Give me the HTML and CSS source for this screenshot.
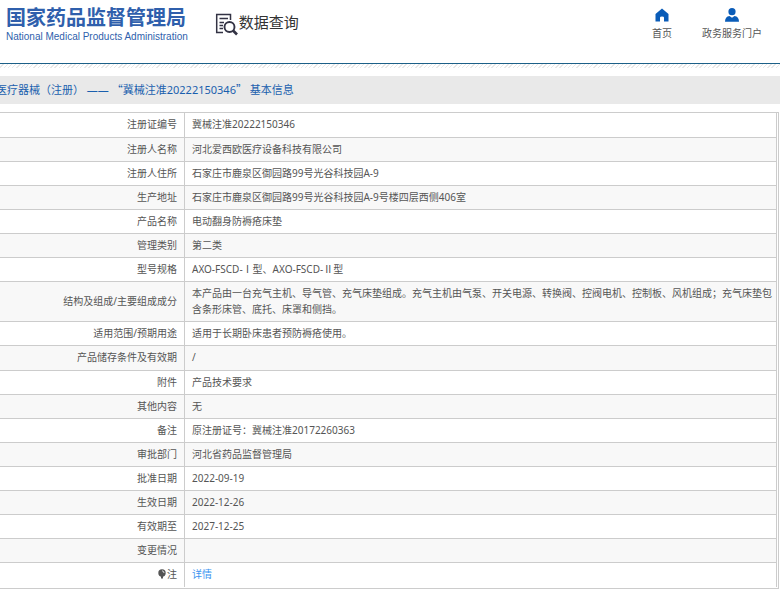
FILE: index.html
```html
<!DOCTYPE html>
<html lang="zh-CN">
<head>
  <meta charset="UTF-8">
  <meta name="viewport" content="width=device-width, initial-scale=1.0">
  <title>国家药品监督管理局 - 数据查询</title>
  <link rel="stylesheet" href="styles.css">
</head>
<body>
  <header class="header">
    <div class="logo">
      <div class="logo-cn">国家药品监督管理局</div>
      <div class="logo-en">National Medical Products Administration</div>
    </div>
    <div class="search-title">
      <svg class="search-icon" viewBox="0 0 24 24" width="24" height="24" fill="none" stroke="#333344">
        <path d="M8 20.500H1.700V2.500H15.500V8" stroke-width="1.500"/>
        <path d="M4.500 6.500H13M4.500 10.500H9M4.500 13.500H8M4.500 16.500H8" stroke-width="1.300"/>
        <circle cx="14.500" cy="15" r="5" stroke-width="1.900"/>
        <path d="M18 18.500L22 22.500" stroke-width="2.600"/>
      </svg>
      <span>数据查询</span>
    </div>
    <nav class="nav">
      <a href="#">
        <svg viewBox="0 0 14 14" width="14" height="14" fill="#0a5cb8"><path d="M7 0.500L13.500 6V13.500H9V9.500Q9 8.500 7 8.500T5 9.500V13.500H0.500V6Z"/></svg>
        首页
      </a>
      <a href="#">
        <svg viewBox="0 0 14 14" width="14" height="14" fill="#0a5cb8"><circle cx="7" cy="3.700" r="3.600"/><path d="M0 13.800Q0 8.600 4.500 8L7 9.800L9.500 8Q14 8.600 14 13.800Z"/></svg>
        政务服务门户
      </a>
    </nav>
  </header>
  <div class="stripe"></div>

  <main>
    <h1 class="title">医疗器械（注册） —— <span class="quote">“</span>冀械注准20222150346<span class="quote">”</span> 基本信息</h1>

    <div class="detail">
      <table>
        <tbody>
          <tr><th scope="row">注册证编号</th><td>冀械注准20222150346</td></tr>
          <tr><th scope="row">注册人名称</th><td>河北爱西欧医疗设备科技有限公司</td></tr>
          <tr><th scope="row">注册人住所</th><td>石家庄市鹿泉区御园路99号光谷科技园A-9</td></tr>
          <tr><th scope="row">生产地址</th><td>石家庄市鹿泉区御园路99号光谷科技园A-9号楼四层西侧406室</td></tr>
          <tr><th scope="row">产品名称</th><td>电动翻身防褥疮床垫</td></tr>
          <tr><th scope="row">管理类别</th><td>第二类</td></tr>
          <tr><th scope="row">型号规格</th><td>AXO-FSCD-Ⅰ型、AXO-FSCD-Ⅱ型</td></tr>
          <tr><th scope="row">结构及组成/主要组成成分</th><td>本产品由一台充气主机、导气管、充气床垫组成。充气主机由气泵、开关电源、转换阀、控阀电机、控制板、风机组成；充气床垫包含条形床管、底托、床罩和侧挡。</td></tr>
          <tr><th scope="row">适用范围/预期用途</th><td>适用于长期卧床患者预防褥疮使用。</td></tr>
        </tbody>
        <tbody>
          <tr><th scope="row">产品储存条件及有效期</th><td>/</td></tr>
          <tr><th scope="row">附件</th><td>产品技术要求</td></tr>
          <tr><th scope="row">其他内容</th><td>无</td></tr>
          <tr><th scope="row">备注</th><td>原注册证号：冀械注准20172260363</td></tr>
          <tr><th scope="row">审批部门</th><td>河北省药品监督管理局</td></tr>
          <tr><th scope="row">批准日期</th><td>2022-09-19</td></tr>
          <tr><th scope="row">生效日期</th><td>2022-12-26</td></tr>
          <tr><th scope="row">有效期至</th><td>2027-12-25</td></tr>
          <tr><th scope="row">变更情况</th><td></td></tr>
          <tr><th scope="row"><svg class="note-icon" viewBox="0 0 8 10" width="8" height="10"><circle cx="4" cy="4" r="3.700" fill="#555"/><path d="M3 7H5V9.500H3Z" fill="#555"/><path d="M4 1.800Q6 2 6 4" fill="none" stroke="#ddd"/></svg>注</th><td><a href="#">详情</a></td></tr>
        </tbody>
      </table>
    </div>
  </main>
</body>
</html>
```
FILE: styles.css
```css
* {
  box-sizing: border-box;
}

body {
  margin: 0;
  font-family: "Noto Sans", "Noto Sans CJK SC", sans-serif;
  font-size: 10px;
  line-height: 16px;
  color: #555;
  background: #fff;
  overflow-x: hidden;
}

a {
  color: #3b94f0;
  text-decoration: none;
}

.header {
  display: flex;
  align-items: flex-start;
  height: 64px;
  padding: 5px 18px 0 6px;
  border-bottom: 1px solid #1c6088;
}

.logo {
  color: #2f5fac;
  white-space: nowrap;
}

.logo-cn {
  font-family: "Noto Sans CJK SC", sans-serif;
  font-size: 20px;
  line-height: 24px;
  font-weight: bold;
}

.logo-en {
  font-family: "Liberation Sans", Arial, sans-serif;
  font-size: 10px;
  line-height: 16px;
}

.search-title {
  display: flex;
  margin-left: 27px;
  padding-top: 7px;
  font-size: 15px;
  line-height: 20px;
  color: #333;
}

.nav {
  display: flex;
  gap: 30px;
  margin-left: auto;
}

.nav a {
  display: flex;
  flex-direction: column;
  align-items: center;
  gap: 3px;
  padding-top: 3px;
  color: #555;
}

.stripe {
  height: 4px;
  background: repeating-linear-gradient(135deg, #fff 0, #fff 2px, #e8e8e8 2px, #e8e8e8 3px);
}

.title {
  margin: 8px 0;
  padding: 0;
  font-size: 11px;
  line-height: 28px;
  font-weight: normal;
  color: #1a5fae;
  background: #e9e9e9;
  text-indent: -4px;
  white-space: nowrap;
}

/* full-width quotes */
.quote {
  font-family: "Noto Sans CJK SC", sans-serif;
  line-height: 1;
}

.detail {
  margin-right: 1px;
  padding: 0 1px 1px 0;
  border: 1px solid #ccc;
  border-left: 0;
}

table {
  width: 100%;
  border-collapse: separate;
  border-spacing: 0;
  border-right: 1px solid #ccc;
}

th,
td {
  padding: 3px 3px 4px 7px;
  border-bottom: 1px solid #ccc;
  font-weight: normal;
}

th {
  width: 185px;
  padding-right: 7px;
  border-right: 1px solid #ccc;
  text-align: right;
}

td {
  text-align: left;
}

/* zebra rows, continued across both groups */
tbody:first-child tr:nth-child(even),
tbody:last-child tr:nth-child(odd) {
  background: #f8f8f8;
}

tbody tr:first-child > * {
  padding-bottom: 5px;
}

tbody:last-child tr:last-child > * {
  padding-bottom: 5px;
  border-bottom: 0;
}

.note-icon {
  margin-right: 1px;
  vertical-align: -1px;
}
```
